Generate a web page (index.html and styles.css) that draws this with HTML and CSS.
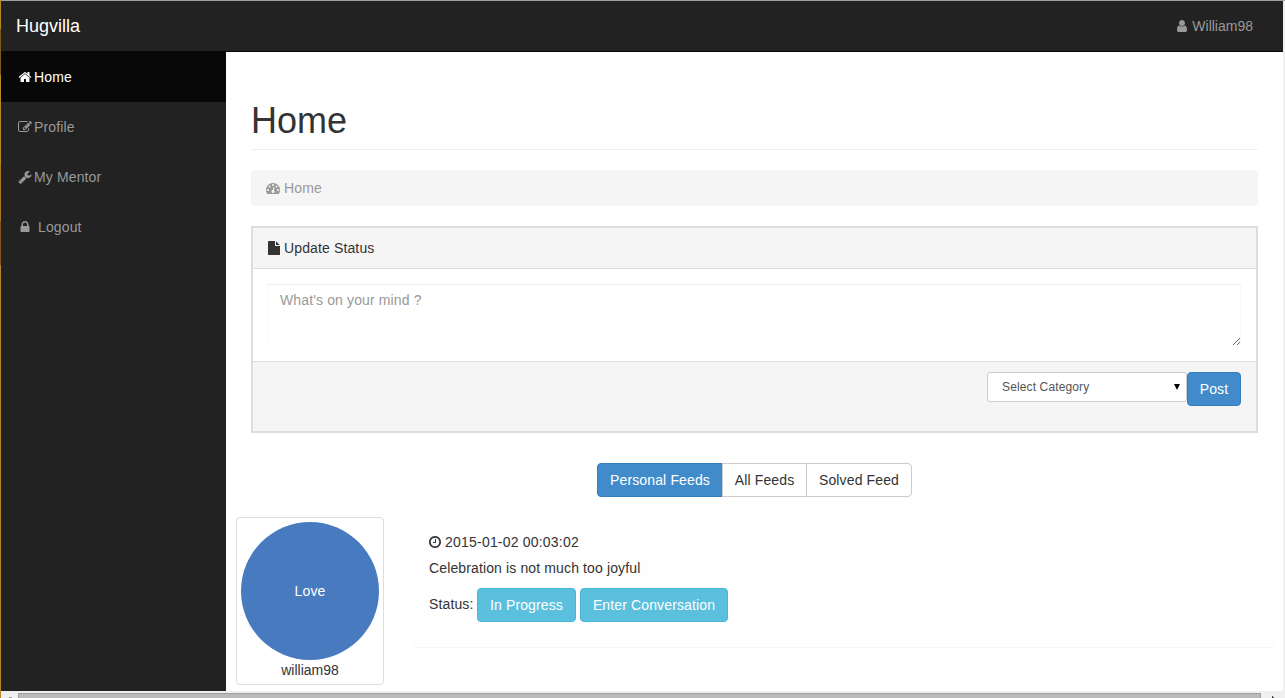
FILE: index.html
```
<!DOCTYPE html>
<html lang="en">
  <head>
    <meta charset="UTF-8" />
    <title>Hugvilla</title>
    <link rel="stylesheet" href="styles.css">
  </head>
  <body>
    <div class="window">
      <!-- top navbar -->
      <nav class="navbar">
        <a class="brand" href="#">Hugvilla</a>
        <a class="user" href="#"><svg class="fa fa-user" viewBox="128 0 1408 1792"><path d="M1536 1399q0 109-62.5 187t-150.5 78h-854q-88 0-150.5-78t-62.5-187q0-85 8.5-160.5t31.5-152 58.5-131 94-89 134.5-34.5q131 128 313 128t313-128q76 0 134.5 34.5t94 89 58.5 131 31.5 152 8.5 160.5zm-256-887q0 159-112.5 271.5t-271.5 112.5-271.5-112.5-112.5-271.5 112.5-271.5 271.5-112.5 271.5 112.5 112.5 271.5z"/></svg> William98</a>
      </nav>

      <div class="wrapper">
        <!-- sidebar -->
        <ul class="side-nav">
          <li class="active">
            <a href="#"><svg class="fa fa-fw" viewBox="0 0 1792 1792"><path d="M1472 992v480q0 26-19 45t-45 19h-384v-384h-256v384h-384q-26 0-45-19t-19-45v-480q0-1 .5-3t.5-3l575-474 575 474q1 2 1 6zm223-69l-62 74q-8 9-21 11h-3q-13 0-21-7l-692-577-692 577q-12 8-24 7-13-2-21-11l-62-74q-8-10-7-23.5t11-21.5l719-599q32-26 76-26t76 26l244 204v-195q0-14 9-23t23-9h192q14 0 23 9t9 23v408l219 182q10 8 11 21.5t-7 23.5z"/></svg>Home</a>
          </li>
          <li>
            <a href="#"><svg class="fa fa-fw" viewBox="0 0 1792 1792"><path d="M888 1184l116-116-152-152-116 116v56h96v96h56zm440-720q-16-16-33 1l-350 350q-17 17-1 33t33-1l350-350q17-17 1-33zm80 594v190q0 119-84.5 203.5t-203.5 84.5h-832q-119 0-203.5-84.5t-84.5-203.5v-832q0-119 84.5-203.5t203.5-84.5h832q63 0 117 25 15 7 18 23 3 17-9 29l-49 49q-14 14-32 8-23-6-45-6h-832q-66 0-113 47t-47 113v832q0 66 47 113t113 47h832q66 0 113-47t47-113v-126q0-13 9-22l64-64q15-15 35-7t20 29zm-96-738l288 288-672 672h-288v-288zm444 132l-92 92-288-288 92-92q28-28 68-28t68 28l152 152q28 28 28 68t-28 68z"/></svg>Profile</a>
          </li>
          <li>
            <a href="#"><svg class="fa fa-fw" viewBox="0 0 1792 1792"><path d="M448 1472q0-26-19-45t-45-19-45 19-19 45 19 45 45 19 45-19 19-45zm644-420l-682 682q-37 37-90 37-52 0-91-37l-106-108q-38-36-38-90 0-53 38-91l681-681q39 98 114.5 173.5t173.5 114.5zm634-435q0 39-23 106-47 134-164.5 217.5t-258.5 83.5q-185 0-316.5-131.5t-131.5-316.5 131.5-316.5 316.5-131.5q58 0 121.5 16.5t107.5 46.5q16 11 16 28t-16 28l-293 169v224l193 107q5-3 79-48.5t135.5-81 70.5-35.5q15 0 23.5 10t8.5 25z"/></svg>My Mentor</a>
          </li>
          <li>
            <a href="#"><svg class="fa fa-fw" viewBox="0 0 1792 1792"><path d="M640 768h512v-192q0-106-75-181t-181-75-181 75-75 181v192zm832 96v576q0 40-28 68t-68 28h-960q-40 0-68-28t-28-68v-576q0-40 28-68t68-28h32v-192q0-184 132-316t316-132 316 132 132 316v192h32q40 0 68 28t28 68z"/></svg> Logout</a>
          </li>
        </ul>

        <!-- page content -->
        <div class="page">
          <div class="inner">
            <h1 class="page-header">Home</h1>
            <div class="breadcrumb"><svg class="fa" viewBox="0 0 1792 1792"><path d="M384 1152q0-53-37.5-90.5t-90.5-37.5-90.5 37.5-37.5 90.5 37.5 90.5 90.5 37.5 90.5-37.5 37.5-90.5zm192-448q0-53-37.5-90.5t-90.5-37.5-90.5 37.5-37.5 90.5 37.5 90.5 90.5 37.5 90.5-37.5 37.5-90.5zm428 481l101-382q6-26-7.5-48.5t-38.5-29.5-48 6.5-30 39.5l-101 382q-60 5-107 43.5t-63 98.5q-20 77 20 146t117 89 146-20 89-117q16-60-6-117t-72-91zm660-33q0-53-37.5-90.5t-90.5-37.5-90.5 37.5-37.5 90.5 37.5 90.5 90.5 37.5 90.5-37.5 37.5-90.5zm-640-640q0-53-37.5-90.5t-90.5-37.5-90.5 37.5-37.5 90.5 37.5 90.5 90.5 37.5 90.5-37.5 37.5-90.5zm448 192q0-53-37.5-90.5t-90.5-37.5-90.5 37.5-37.5 90.5 37.5 90.5 90.5 37.5 90.5-37.5 37.5-90.5zm320 448q0 261-141 483-19 29-54 29h-1402q-35 0-54-29-141-221-141-483 0-182 71-348t191-286 286-191 348-71 348 71 286 191 191 286 71 348z"/></svg> Home</div>

            <!-- status form -->
            <form class="panel">
              <div class="panel-heading"><svg class="fa fa-file" viewBox="128 0 1536 1792"><path d="M1152 512v-472q22 14 36 28l408 408q14 14 28 36h-472zm-128 32q0 40 28 68t68 28h544v1056q0 40-28 68t-68 28h-1344q-40 0-68-28t-28-68v-1600q0-40 28-68t68-28h800v544z"/></svg> Update Status</div>
              <div class="panel-body">
                <textarea placeholder="What's on your mind ?"></textarea>
              </div>
              <div class="panel-footer">
                <div class="select">
                  <select>
                    <option>Select Category</option>
                  </select>
                </div>
                <button type="button" class="btn btn-primary">Post</button>
              </div>
            </form>

            <div class="btn-group">
              <button class="btn btn-primary">Personal Feeds</button>
              <button class="btn btn-default">All Feeds</button>
              <button class="btn btn-default">Solved Feed</button>
            </div>
          </div>

          <!-- feed -->
          <div class="feed">
            <div class="thumbnail">
              <div class="circle">Love</div>
              <span>william98</span>
            </div>
            <div class="post">
              <p class="time"><svg class="fa fa-clock" viewBox="128 0 1536 1792"><path d="M1024 544v448q0 14-9 23t-23 9h-320q-14 0-23-9t-9-23v-64q0-14 9-23t23-9h224v-352q0-14 9-23t23-9h64q14 0 23 9t9 23zm416 352q0-148-73-273t-198-198-273-73-273 73-198 198-73 273 73 273 198 198 273 73 273-73 198-198 73-273zm224 0q0 209-103 385.5t-279.5 279.5-385.5 103-385.5-103-279.5-279.5-103-385.5 103-385.5 279.5-279.5 385.5-103 385.5 103 279.5 279.5 103 385.5z"/></svg> 2015-01-02 00:03:02</p>
              <p class="text">Celebration is not much too joyful</p>
              <div class="status">
                <span>Status:</span>
                <button class="btn btn-info">In Progress</button>
                <button class="btn btn-info">Enter Conversation</button>
              </div>
            </div>
          </div>
        </div>
      </div>

      <!-- horizontal scrollbar -->
      <div class="scrollbar">
        <i class="arrow arrow-left"></i>
        <div class="thumb"></div>
        <i class="arrow arrow-right"></i>
      </div>
    </div>
  </body>
</html>
```
FILE: styles.css
```
* {
  box-sizing: border-box;
}

html,
body,
ul,
p,
h1 {
  margin: 0;
  padding: 0;
}

body {
  height: 698px;
  overflow: hidden;
  font-family: "Liberation Sans", Arial, sans-serif;
  font-size: 14px;
  line-height: 20px;
  letter-spacing: 0.13px;
  color: #333;
  background: linear-gradient(#b58b24 29px, #7c5b1a 29px, #7c5b1a 75px, #b58b24 75px, #b58b24 165px, #b07425 165px, #b07425 221px, #85561f 221px, #85561f 265px, #b58330 265px);
}

a {
  color: #999;
  text-decoration: none;
}

ul {
  list-style: none;
}

button,
select,
textarea {
  font-family: inherit;
  letter-spacing: inherit;
}

/* window frame */
.window {
  display: flex;
  flex-direction: column;
  height: 698px;
  margin-left: 1px;
  border-top: 1px solid #a0a0a0;
  background-color: #f0f0f0;
}

/* icons */
.fa {
  display: inline-block;
  width: 14px;
  height: 14px;
  fill: currentColor;
  vertical-align: -2px;
}

.fa-fw {
  margin: 0 2px;
}

.fa-user {
  width: 11px;
  margin-right: 1px;
}

.fa-file,
.fa-clock {
  width: 12px;
}

/* navbar */
.navbar {
  display: flex;
  flex: none;
  justify-content: space-between;
  height: 51px;
  margin-right: 2px;
  padding: 15px 30px 0 15px;
  letter-spacing: 0;
  background-color: #222;
  border-bottom: 1px solid #080808;
}

.brand {
  font-size: 18px;
  color: #fff;
}

/* layout */
.wrapper {
  display: flex;
  flex: none;
  height: 639px;
  margin-right: 2px;
  background-color: #fff;
}

/* sidebar */
.side-nav {
  flex: none;
  width: 225px;
  background-color: #222;
}

.side-nav a {
  display: block;
  padding: 15px;
}

.side-nav .active a {
  color: #fff;
  background-color: #080808;
}

.page {
  flex: 1;
  padding: 0 9px 0 10px;
}

.inner {
  padding: 0 16px 0 15px;
}

.page-header {
  height: 98px;
  margin-bottom: 20px;
  padding-top: 49px;
  border-bottom: 1px solid #eee;
  font-size: 36px;
  font-weight: 500;
  line-height: 39px;
  letter-spacing: 0;
}

.breadcrumb {
  height: 36px;
  margin-bottom: 20px;
  padding: 8px 15px;
  color: #999;
  background-color: #f5f5f5;
  border-radius: 4px;
}

/* status panel */
.panel {
  height: 207px;
  margin-bottom: 30px;
  border: 2px solid #ddd;
}

.panel-heading {
  height: 41px;
  padding: 10px 15px;
  background-color: #f5f5f5;
  border-bottom: 1px solid #ddd;
}

.panel-body {
  height: 92px;
  padding: 15px;
}

.panel-body textarea {
  display: block;
  width: 100%;
  height: 62px;
  padding: 6px 12px;
  border: 0;
  box-shadow: inset 0 1px #eee, inset 1px 0 #f7f7f7, inset -1px 0 #f7f7f7;
  font-size: 14px;
  line-height: 20px;
  background-color: #fff;
}

.panel-body textarea::placeholder {
  color: #999;
}

.panel-footer {
  display: flex;
  justify-content: flex-end;
  align-items: flex-start;
  height: 70px;
  padding: 10px 15px;
  background-color: #f5f5f5;
  border-top: 1px solid #ddd;
}

.panel-footer .btn {
  width: 54px;
}

.select {
  position: relative;
}

.select select {
  display: block;
  width: 200px;
  height: 30px;
  padding: 5px 14px;
  border: 1px solid #ccc;
  border-radius: 3px;
  font-size: 12px;
  line-height: 18px;
  color: #555;
  background-color: #fff;
  appearance: none;
}

/* select arrow */
.select::after {
  content: '';
  position: absolute;
  right: 7px;
  top: 12px;
  border: 3px solid transparent;
  border-top: 6px solid #000;
  border-bottom: 0;
}

/* buttons */
.btn {
  height: 34px;
  padding: 6px 0;
  border: 1px solid transparent;
  border-radius: 4px;
  font-size: 14px;
  line-height: 20px;
  text-align: center;
}

.btn-primary {
  color: #fff;
  background-color: #428bca;
  border-color: #357ebd;
}

.btn-default {
  color: #333;
  background-color: #fff;
  border-color: #ccc;
}

.btn-info {
  width: 99px;
  color: #fff;
  background-color: #5bc0de;
  border-color: #46b8da;
}

.btn-info + .btn-info {
  width: 148px;
}

.btn-group {
  display: flex;
  justify-content: center;
  margin-bottom: 20px;
}

.btn-group .btn {
  width: 85px;
  border-radius: 0;
}

.btn-group .btn + .btn {
  margin-left: -1px;
}

.btn-group .btn:first-child {
  width: 126px;
  border-radius: 4px 0 0 4px;
}

.btn-group .btn:last-child {
  width: 106px;
  border-radius: 0 4px 4px 0;
}

/* feed */
.feed {
  display: flex;
  align-items: flex-start;
  justify-content: space-between;
}

.thumbnail {
  width: 148px;
  height: 168px;
  padding: 4px;
  border: 1px solid #ddd;
  border-radius: 4px;
  text-align: center;
  letter-spacing: 0;
}

.circle {
  height: 138px;
  border-radius: 50%;
  line-height: 138px;
  letter-spacing: 0.2px;
  color: #fff;
  background-color: #477abf;
}

.post {
  width: 861px;
  height: 130px;
  padding: 15px 16px;
  border-radius: 4px;
  background-color: #fefefe;
  box-shadow: 0 1px 1px rgba(0, 0, 0, 0.05);
}

.post .time {
  margin-bottom: 6px;
  letter-spacing: 0.2px;
}

.post .text {
  margin-bottom: 10px;
}

.post .status {
  display: flex;
  gap: 4px;
}

.status span {
  width: 44px;
  line-height: 32px;
}

/* scrollbar */
.scrollbar {
  display: flex;
  flex: none;
  height: 7px;
  padding-top: 2px;
}

.thumb {
  width: 1243px;
  height: 17px;
  border: 1px solid #a0a0a0;
  background-color: #bababa;
}

.arrow {
  width: 17px;
  height: 5px;
  background: linear-gradient(#999, #999) no-repeat 8px 4px/3px 1px;
}

.arrow-right {
  background: linear-gradient(#444, #444) no-repeat 11px 3px/1px 2px, linear-gradient(#444, #444) no-repeat 12px 4px/1px 1px;
}
```
